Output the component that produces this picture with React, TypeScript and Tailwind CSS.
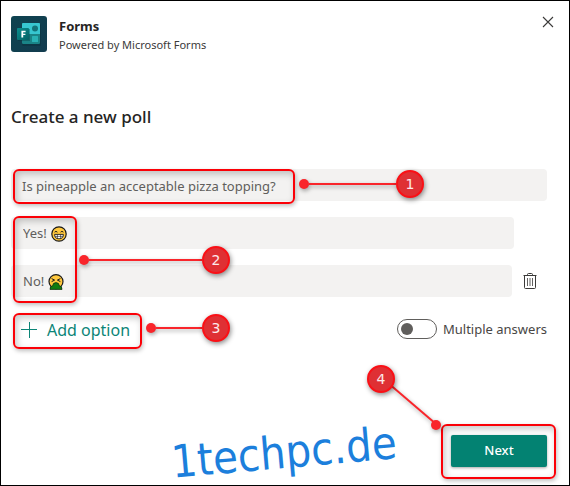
import React from 'react';

const FormsLogo: React.FC = () => (
  <svg width="36" height="36" viewBox="0 0 36 36" className="shrink-0" aria-hidden="true">
    <defs>
      <linearGradient id="tile" x1="0" y1="0" x2="1" y2="1">
        <stop offset="0" stopColor="#0e4350" />
        <stop offset="1" stopColor="#123b4e" />
      </linearGradient>
      <linearGradient id="badge" x1="0" y1="0" x2="1" y2="1">
        <stop offset="0" stopColor="#0a8f8f" />
        <stop offset="1" stopColor="#046064" />
      </linearGradient>
    </defs>
    <rect width="36" height="36" rx="3" fill="url(#tile)" />
    <rect x="11" y="8" width="19" height="22" rx="1.5" fill="#0a2f3c" opacity="0.5" />
    <rect x="11" y="7" width="18" height="21" rx="1.2" fill="#1a8487" />
    <path d="M12.2 7h15.6q1.2 0 1.2 1.2V18H11V8.2q0-1.2 1.2-1.2z" fill="#37c6d0" />
    <circle cx="24" cy="12.5" r="3" fill="#13747a" />
    <rect x="21" y="20" width="6" height="6" rx="0.5" fill="#29b2b4" />
    <rect x="7" y="13" width="12" height="12" fill="#06303a" opacity="0.35" />
    <rect x="6" y="12" width="12" height="12" rx="1" fill="url(#badge)" />
    <path d="M10.4 14.8h4.2v1.5h-2.4v1.4h2.2v1.4h-2.2v2.3h-1.8z" fill="#fff" />
  </svg>
);

const GrinEmoji: React.FC = () => (
  <svg width="16" height="16" viewBox="0 0 16 16" role="img" aria-label="grinning face">
    <circle cx="8" cy="8" r="7.2" fill="#ffc83d" stroke="#1a1a1a" strokeWidth="1.2" />
    <path d="M3.6 6.2q1.3-1.8 2.8 0M9.6 6.2q1.3-1.8 2.8 0" fill="none" stroke="#1a1a1a" strokeWidth="1" />
    <path d="M3.6 8.4h8.8q0 4.4-4.4 4.4T3.6 8.4z" fill="#fff" stroke="#1a1a1a" strokeWidth="0.9" />
    <path d="M4 10.4h8M6.4 8.6v4M9.6 8.6v4" stroke="#1a1a1a" strokeWidth="0.6" />
  </svg>
);

const SickEmoji: React.FC = () => (
  <svg width="16" height="16" viewBox="0 0 16 16" role="img" aria-label="vomiting face">
    <circle cx="8" cy="7.6" r="7" fill="#ffc83d" stroke="#1a1a1a" strokeWidth="1.2" />
    <path d="M3.6 4.6l3 1.5-3 1.5M12.4 4.6l-3 1.5 3 1.5" fill="none" stroke="#1a1a1a" strokeWidth="1" />
    <path d="M5.4 9.6q2.6-2 5.2 0l.6 2q3 .6 2.8 3.8H2q-.2-3.2 2.8-3.8z" fill="#107c10" stroke="#12320f" strokeWidth="0.8" />
  </svg>
);

const TrashIcon: React.FC = () => (
  <svg width="14" height="18" viewBox="0 0 14 18" fill="none" stroke="#3b3a39" aria-hidden="true">
    <path d="M0.5 3.5h13M4.5 3.5v-1q0-1 1-1h3q1 0 1 1v1M1.5 3.5v12q0 1 1 1h9q1 0 1-1v-12" />
    <path d="M4.5 6v8M7 6v8M9.5 6v8" strokeWidth="0.8" />
  </svg>
);

const CloseIcon: React.FC = () => (
  <svg width="12" height="12" viewBox="0 0 12 12" stroke="#3b3a39" aria-hidden="true">
    <path d="M1 1l10 10M11 1L1 11" strokeWidth="1.1" />
  </svg>
);

const PlusIcon: React.FC = () => (
  <svg width="16" height="16" viewBox="0 0 16 16" stroke="#0c8577" aria-hidden="true">
    <path d="M0 7.5h16M8.5 0v16" />
  </svg>
);

const Highlight: React.FC<{ className: string }> = ({ className }) => (
  <div
    className={`pointer-events-none absolute rounded-md border-2 border-[#fb0007] shadow-[1px_2px_4px_rgba(0,0,0,0.25),inset_2px_3px_7px_rgba(0,0,0,0.22)] ${className}`}
  />
);

const Badge: React.FC<{ label: string }> = ({ label }) => (
  <span className="flex size-7 shrink-0 items-center justify-center rounded-full border-2 border-[#fa1016] bg-[#df3034] font-['DejaVu_Sans'] text-sm text-white/90 shadow-[1px_2px_5px_rgba(0,0,0,0.45)]">
    {label}
  </span>
);

const Callout: React.FC<{ label: string; className: string }> = ({ label, className }) => (
  <div className={`pointer-events-none absolute flex items-center ${className}`}>
    <span className="size-2.5 rounded-full bg-[#f9252b] shadow-[1px_2px_4px_rgba(0,0,0,0.35)]" />
    <span className="h-0.5 flex-1 bg-[#f9252b] shadow-[1px_2px_4px_rgba(0,0,0,0.35)]" />
    <Badge label={label} />
  </div>
);

const App: React.FC = () => {
  return (
    <main className="relative flex min-h-screen flex-col border border-black bg-white pt-[15px] pr-[22px] pb-[18px] pl-2.5 font-['Noto_Sans','Open_Sans',sans-serif] text-[#252423]">
      <header className="flex items-start">
        <FormsLogo />
        <div className="ml-3 flex-1">
          <h1 className="text-[13px] leading-5 font-bold">Forms</h1>
          <p className="text-[11px] leading-[18px] text-[#3b3a39]">Powered by Microsoft Forms</p>
        </div>
        <button type="button" aria-label="Close" className="-mr-[7px]">
          <CloseIcon />
        </button>
      </header>

      <h2 className="mt-[51px] text-[17px] leading-6 font-medium text-[#252423]">Create a new poll</h2>

      <form className="mt-10 flex flex-1 flex-col gap-4 text-[13px] text-[#605e5c]">
        {/* Question */}
        <div className="relative">
          <input
            aria-label="Question"
            defaultValue="Is pineapple an acceptable pizza topping?"
            className="block h-8 w-full rounded-sm bg-[#f3f2f1] px-[11px] pt-0.5"
          />
          <Highlight className="top-0 left-0.5 h-[35px] w-[282px]" />
          <Callout label="1" className="top-px left-72 w-[125px]" />
        </div>

        {/* Options */}
        <div className="relative flex flex-col gap-4">
          <div className="mr-[33px] flex h-8 items-center gap-1 rounded-sm bg-[#f3f2f1] pt-0.5 pl-3">
            <input aria-label="Option 1" defaultValue="Yes!" className="field-sizing-content" />
            <GrinEmoji />
          </div>
          <div className="flex items-center">
            <div className="flex h-8 flex-1 items-center gap-1 rounded-sm bg-[#f3f2f1] pt-0.5 pl-3">
              <input aria-label="Option 2" defaultValue="No!" className="field-sizing-content" />
              <SickEmoji />
            </div>
            <button type="button" aria-label="Delete option" className="mr-2.5 ml-[11px]">
              <TrashIcon />
            </button>
          </div>
          <Highlight className="-top-px left-0.5 h-[87px] w-16" />
          <Callout label="2" className="top-[29px] left-[68px] w-[151px]" />
        </div>

        <div className="relative flex items-start justify-between">
          <button type="button" className="ml-2.5 flex items-center gap-2.5 pt-px text-base leading-8 text-[#0c8577]">
            <PlusIcon />
            Add option
          </button>
          <label className="mt-1.5 flex items-center gap-1.5 leading-5 text-[#484644]">
            <input
              type="checkbox"
              role="switch"
              className="h-5 w-10 appearance-none rounded-full border border-[#605e5c] bg-white p-[3px] before:block before:size-3 before:rounded-full before:bg-[#605e5c] checked:before:ml-5"
            />
            Multiple answers
          </label>
          <Highlight className="top-0 left-0.5 h-9 w-[129px]" />
          <Callout label="3" className="top-px left-[135px] w-[84px]" />
        </div>

        <div className="relative mt-auto flex justify-end">
          <button
            type="submit"
            className="h-8 w-24 rounded-xs bg-[#038272] font-medium text-white shadow-[0_1px_3px_rgba(0,0,0,0.35)]"
          >
            Next
          </button>
          <Highlight className="-top-[11px] -right-[9px] h-[55px] w-[115px]" />
          <div className="pointer-events-none absolute -top-[70px] right-[152px]">
            <svg width="64" height="54" viewBox="0 0 64 54" className="absolute top-3 left-3.5 drop-shadow-[1px_2px_2px_rgba(0,0,0,0.35)]" aria-hidden="true">
              <path d="M0 0L55 47" stroke="#f9252b" strokeWidth="2" />
              <circle cx="55" cy="48" r="5" fill="#f9252b" />
            </svg>
            <div className="relative">
              <Badge label="4" />
            </div>
          </div>
        </div>
      </form>

      <p className="pointer-events-none absolute bottom-3 left-[170px] -rotate-5 font-['DejaVu_Sans_Condensed','DejaVu_Sans',sans-serif] text-[45px] leading-10 text-[#1c7fdc]">
        1techpc.de
      </p>
    </main>
  );
};

export default App;
